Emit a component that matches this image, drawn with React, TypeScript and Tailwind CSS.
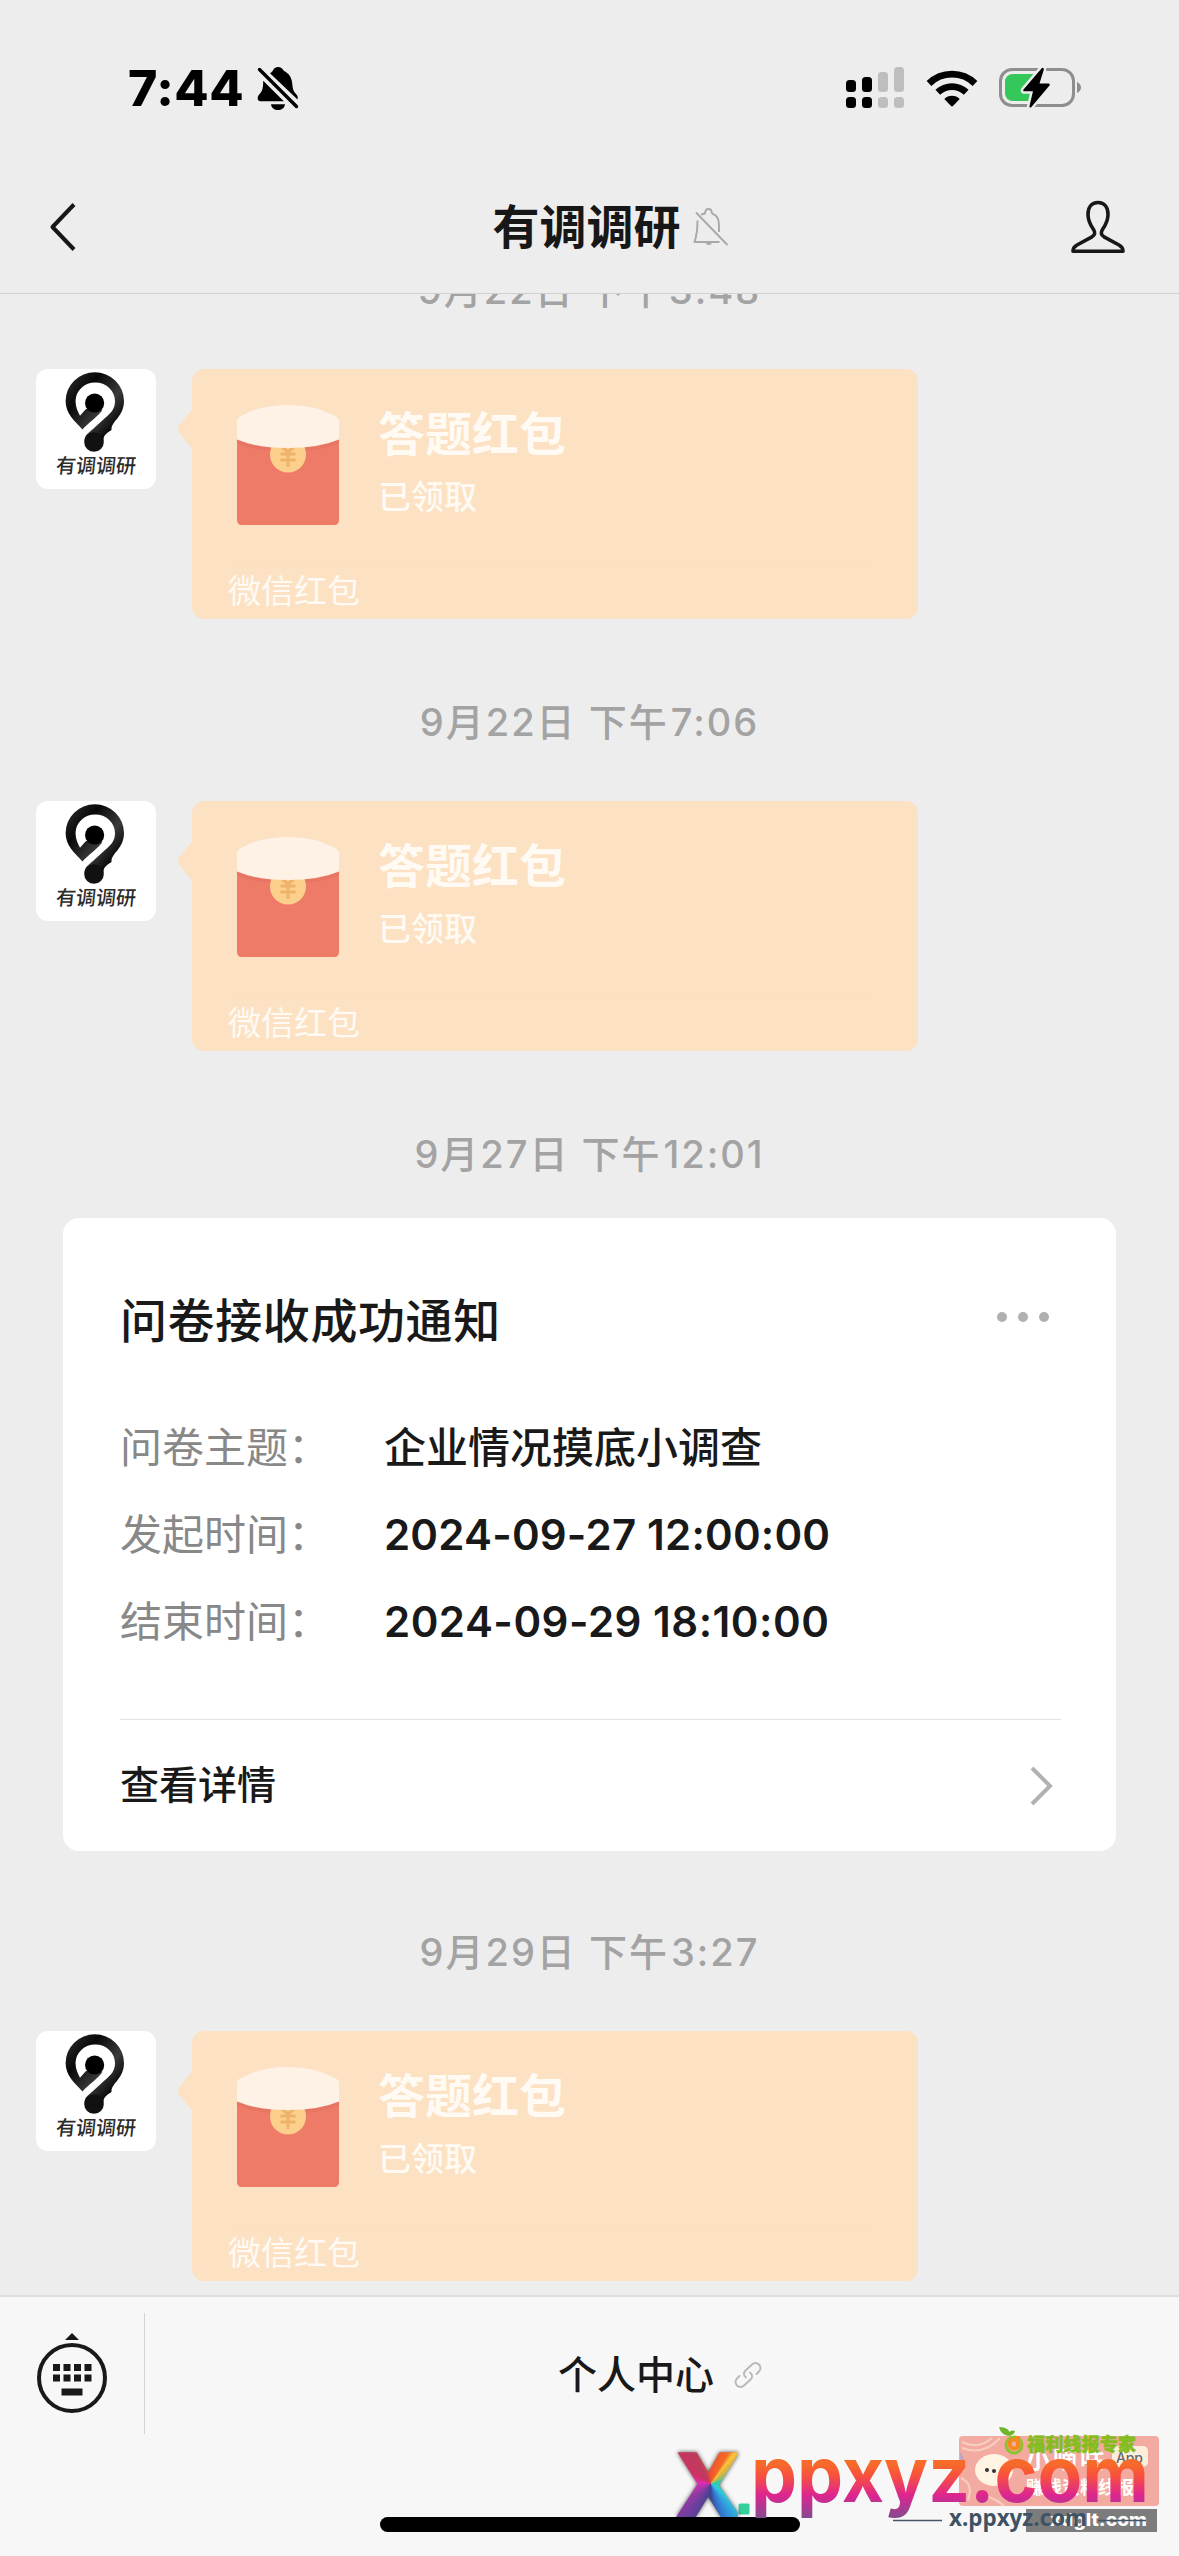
import { Fragment } from 'react'

const sans = "font-['Inter','Noto_Sans_CJK_SC',sans-serif]"

function MutedBellSolid() {
  return (
    <svg className="h-[46px] w-[44px]" viewBox="0 0 44 46" fill="#000">
      <path d="M14 8.2C16 7 16.2 6.600 17 5.200C18.200 3.200 20 2 22 2C25 2 26.800 3.800 28 6C32.400 8 35.600 12 36.200 18C36.700 23 37 26 40 29C41.700 31 42 32 41.500 34.500Z" />
      <path d="M7.200 15.800L27.800 36.200H4.500C1 36.200 1 32 3.200 29.500C6.600 26 7.200 23 7.200 15.800Z" />
      <path d="M15 39.200H29C28.600 42.800 25.600 45 22 45C18.400 45 15.400 42.800 15 39.200Z" />
      <path d="M3.500 4.500L40.500 41.500" stroke="#000" strokeWidth="3.400" strokeLinecap="round" />
    </svg>
  )
}

function Signal() {
  return (
    <svg className="h-[42px] w-[58px]" viewBox="0 0 58 42">
      <g fill="#000">
        <rect x="0" y="13" width="10" height="12" rx="3.500" />
        <rect x="0" y="30" width="10" height="11" rx="3.500" />
        <rect x="16" y="10" width="10" height="15" rx="3.500" />
        <rect x="16" y="30" width="10" height="11" rx="3.500" />
      </g>
      <g fill="#bfbebe">
        <rect x="32" y="5" width="10" height="20" rx="3.500" />
        <rect x="32" y="30" width="10" height="11" rx="3.500" />
        <rect x="48" y="0" width="10" height="25" rx="3.500" />
        <rect x="48" y="30" width="10" height="11" rx="3.500" />
      </g>
    </svg>
  )
}

function Wifi() {
  return (
    <svg className="h-[38px] w-[52px]" viewBox="0 0 52 38">
      <g fill="none" stroke="#000" strokeWidth="6.800">
        <path d="M3 14.500A33 33 0 0 1 49 14.500" />
        <path d="M11.800 23.300A20.500 20.500 0 0 1 40.200 23.300" />
      </g>
      <path d="M18.300 30A11 11 0 0 1 33.700 30L27.200 36.800Q26 38 24.800 36.800Z" />
    </svg>
  )
}

function Battery() {
  return (
    <svg className="h-[44px] w-[84px]" viewBox="0 0 84 44">
      <rect x="1.500" y="3.500" width="73" height="36" rx="11.500" fill="none" stroke="#8e8e8e" strokeWidth="3" />
      <path d="M78 16C80.500 17 82 19 82 21.500S80.500 26 78 27Z" fill="#8e8e8e" />
      <rect x="6" y="8" width="35" height="27" rx="7.500" fill="#34c759" />
      <path
        d="M42.500 2.500L24.500 23.500C23.800 24.500 24.300 25.300 25.300 25.300H34L30.500 40C30.300 42 31.500 42 32.600 40.700L50.500 19.500C51.200 18.500 50.700 17.400 49.500 17.400H40.500L44.700 4C45.200 2 43.700 1 42.500 2.500Z"
        fill="#000"
        stroke="#ededed"
        strokeWidth="5"
        paintOrder="stroke"
      />
    </svg>
  )
}

function MutedBellOutline() {
  return (
    <svg className="h-[40px] w-[36px]" viewBox="0 0 36 40" fill="none" stroke="#a9a9a9" strokeWidth="1.900" strokeLinejoin="round">
      <path d="M4.500 13.500C4.500 23 4.300 27 1.500 35H26.500" />
      <path d="M8 7.500L12 6.500C12.500 0.500 18.500 0.500 19 6.500C24 8 26 12 26 18V25" />
      <path d="M3 5.500L34.500 38" />
      <path d="M13.500 35.500C14 37.500 17.500 37.500 18 35.500" />
    </svg>
  )
}

function Person() {
  return (
    <svg className="h-[54px] w-[54px]" viewBox="0 0 54 54" fill="none" stroke="#171717" strokeWidth="3.600" strokeLinejoin="round">
      <path d="M27 2.500C20.500 2.500 17 7.500 17 14.500C17 20.500 19 24.500 22.500 29.500C24.500 32.500 24 35 21 36.800L6 45C3 46.700 2 48.500 2 51.300H52C52 48.500 51 46.700 48 45L33 36.800C30 35 29.500 32.500 31.500 29.500C35 24.500 37 20.500 37 14.500C37 7.500 33.500 2.500 27 2.500Z" />
    </svg>
  )
}

function AvatarMark() {
  return (
    <svg className="h-[84px] w-[120px]" viewBox="0 0 120 84">
      <defs>
        <linearGradient id="mark" x1="0" y1="0" x2="1" y2="1">
          <stop offset="0" stopColor="#333" />
          <stop offset="0.300" stopColor="#080808" />
          <stop offset="0.600" stopColor="#3a3a3a" />
          <stop offset="0.850" stopColor="#000" />
        </linearGradient>
      </defs>
      {/* pin outline that ends in the lower ball */}
      <path
        d="M46.400 60.500C39 52 29.600 45 29.600 32A29.200 28.700 0 0 1 88 32C88 48 75 52 75.500 61C73 63 67 65 67.500 72L48.500 72C48.500 66 52 64.500 57 60L69 49C75 44 79 40 79 32A19.700 18.500 0 0 0 39.500 32C39.500 38 42 43 44 46.700L50 40L66.500 40.500C64 46 52 54 46.400 60.500Z"
        fill="url(#mark)"
      />
      <circle cx="58.600" cy="34" r="9.600" fill="#000" />
      <circle cx="58" cy="73" r="9.800" fill="#111" />
    </svg>
  )
}

function Avatar() {
  return (
    <div className="flex h-[120px] w-[120px] flex-col items-center overflow-hidden rounded-xl bg-white">
      <AvatarMark />
      <span className="-skew-x-6 text-[20px] leading-[26px] font-medium text-[#2c2c2c]">有调调研</span>
    </div>
  )
}

function Envelope() {
  return (
    <svg className="h-[120px] w-[102px]" viewBox="0 0 102 120">
      <path d="M0 30H102V115Q102 120 97 120H5Q0 120 0 115Z" fill="#ed7b67" />
      <path d="M0 34Q18 43 40 43H62Q84 43 102 34V38Q84 46 62 46H40Q18 46 0 38Z" fill="#e07060" opacity="0.500" />
      <circle cx="51" cy="49.500" r="18" fill="#fcd08c" />
      <path d="M45 42L51 47L57 42M43.500 49H58.500M43.500 55H58.500M51 47V62" fill="none" stroke="#eeb368" strokeWidth="3" />
      <path d="M0 17Q0 12.500 4 11Q24 0 51 0T98 11Q102 12.500 102 17V34.500Q82 43 51 43T0 34.500Z" fill="#fef2e6" />
    </svg>
  )
}

function RedPacket() {
  return (
    <div className="flex pl-9">
      <Avatar />
      <svg className="mt-[40px] ml-[21px] h-[40px] w-[15px]" viewBox="0 0 15 40">
        <path d="M15 0L2 16.500Q0 20 2 23.500L15 40Z" fill="#fce1c3" />
      </svg>
      <div className="flex h-[250px] w-[726px] flex-col rounded-xl bg-[#fce1c3] pr-[44px] pl-[36px] text-[#fffaf3]">
        <div className="flex h-[196px] items-start border-b border-[#fadfc0] pt-9 pl-[9px]">
          <Envelope />
          <div className="ml-[39px] flex flex-col">
            <span className="text-[47px] leading-[58px] font-bold">答题红包</span>
            <span className="mt-[4px] text-[33px] leading-[60px] font-medium">已领取</span>
          </div>
        </div>
        <span className="text-[33px] leading-[52px]">微信红包</span>
      </div>
    </div>
  )
}

function DateLabel({ day, time }: { day: string; time: string }) {
  return (
    <div className="flex justify-center text-[38px] leading-[60px] font-medium tracking-[2px] text-[#a3a3a3]">
      <span className="whitespace-pre">{day} 下午</span>
      <span className="ml-[2px]">{time}</span>
    </div>
  )
}

const details = [
  { label: '问卷主题', value: <span className="font-medium">企业情况摸底小调查</span> },
  { label: '发起时间', value: <span className="font-semibold tracking-[0.2px]">2024-09-27 12:00:00</span> },
  { label: '结束时间', value: <span className="font-semibold tracking-[0.5px]">2024-09-29 18:10:00</span> },
]

function NoticeCard() {
  return (
    <section className="mx-[63px] h-[633px] rounded-2xl bg-white pr-[55px] pl-[57px] text-[#191919]">
      <div className="flex items-center justify-between pt-[68px]">
        <h2 className="text-[47px] leading-[70px] font-medium tracking-[0.6px]">问卷接收成功通知</h2>
        <div className="mr-[12px] -mt-[8px] flex gap-[11px]">
          <i className="size-[10px] rounded-full bg-[#b0b0b0]" />
          <i className="size-[10px] rounded-full bg-[#b0b0b0]" />
          <i className="size-[10px] rounded-full bg-[#b0b0b0]" />
        </div>
      </div>
      <dl className="mt-[48px] grid grid-cols-[264px_1fr] text-[42px] leading-[87px]">
        {details.map(({ label, value }) => (
          <Fragment key={label}>
            <dt className="text-[#888]">{label}：</dt>
            <dd>{value}</dd>
          </Fragment>
        ))}
      </dl>
      <div className="mt-[54px] flex h-[132px] items-center justify-between border-t border-[#e3e3e3] text-[39px] font-medium">
        <span>查看详情</span>
        <svg className="mr-[7px] h-[42px] w-[26px]" viewBox="0 0 26 42" fill="none" stroke="#b2b2b2" strokeWidth="4">
          <path d="M4 3L22 21L4 39" />
        </svg>
      </div>
    </section>
  )
}

function KeyboardIcon() {
  const keys = [19, 29.5, 40, 50.5]
  return (
    <svg className="h-[84px] w-[74px]" viewBox="0 0 74 84" fill="#191919">
      <path d="M31 8L38 1L45 8Z" />
      <circle cx="38" cy="46" r="33" fill="none" stroke="#191919" strokeWidth="4" />
      {keys.map((x) => (
        <Fragment key={x}>
          <rect x={x} y="32" width="7" height="7" />
          <rect x={x} y="42.500" width="7" height="7" />
        </Fragment>
      ))}
      <rect x="27.500" y="56.500" width="21" height="7" />
    </svg>
  )
}

function LinkIcon() {
  return (
    <svg className="h-[28px] w-[28px]" viewBox="0 0 28 28" fill="none" stroke="#b8b8b8" strokeWidth="1.900" strokeLinecap="round">
      <path d="M12 16.500C9 14 9.500 11.500 11.500 9.500L18 3.500C20 1.500 23 1.500 25 3.500S27 8.500 25 10.500L22.500 13" />
      <path d="M16 11.500C19 14 18.500 16.500 16.500 18.500L10 24.500C8 26.500 5 26.500 3 24.500S1 19.500 3 17.500L5.500 15" />
    </svg>
  )
}

function Watermark() {
  return (
    <div className="absolute right-0 bottom-0 h-[136px] w-[519px]">
      <svg className="h-full w-full" viewBox="660 2420 519 136">
        <defs>
          <linearGradient id="word" gradientUnits="userSpaceOnUse" x1="0" y1="2458" x2="0" y2="2518">
            <stop offset="0.100" stopColor="#f76b2a" />
            <stop offset="0.300" stopColor="#f8503f" />
            <stop offset="0.620" stopColor="#dd2590" />
            <stop offset="1" stopColor="#854a90" />
          </linearGradient>
        </defs>
        <rect x="959" y="2436" width="200" height="70" rx="4" fill="#f3aaa0" />
        <path d="M962 2442Q978 2450 992 2438M962 2448Q984 2456 1000 2438M961 2478Q974 2484 968 2500M986 2496Q998 2500 1004 2506" fill="none" stroke="#f7cfc0" strokeWidth="2" />
        <path d="M960 2452Q968 2462 961 2474Z" fill="#b9a3c8" />
        <ellipse cx="994" cy="2470" rx="19" ry="16" fill="#fff3e4" />
        <circle cx="987" cy="2470" r="2" fill="#333" />
        <circle cx="994" cy="2471" r="2" fill="#333" />
        <text x="1026" y="2468" fontSize="24" fontWeight="700" fill="#fff" textLength="78">小嘀咕</text>
        <rect x="1112" y="2446" width="36" height="21" rx="5" fill="#fdeedc" />
        <text x="1116" y="2463" fontSize="14" fontWeight="500" fill="#666" textLength="27">App</text>
        <text x="1026" y="2494" fontSize="18" fontWeight="700" fill="#fff" textLength="108">赚钱资料线报</text>
        <circle cx="1014" cy="2445" r="8" fill="none" stroke="#8fc22f" strokeWidth="3" />
        <path d="M1018 2436V2448" stroke="#f58a1f" strokeWidth="4" />
        <circle cx="1014" cy="2444" r="4.500" fill="none" stroke="#f58a1f" strokeWidth="4" />
        <path d="M999 2427Q1010 2427 1011 2436Q1001 2436 999 2427ZM1008 2435Q1010 2429 1015 2431Q1014 2436 1008 2435Z" fill="#6fb52c" />
        <text x="1027" y="2451" fontSize="18" fontWeight="900" fill="#84bd1e" stroke="#84bd1e" strokeWidth="0.500" textLength="109" lengthAdjust="spacingAndGlyphs">福利线报专家</text>
        <rect x="1026" y="2509" width="131" height="23" fill="#7c7c7c" />
        <text x="1050" y="2526" fontSize="18" fontWeight="800" fill="#fff" textLength="97" lengthAdjust="spacingAndGlyphs">xdglt.com</text>
        <path d="M893 2520.500H942M1098 2520.500H1146" stroke="#43566a" strokeWidth="1.500" />
        <text x="949" y="2526" fontSize="24" fontWeight="700" fill="#3f5265" textLength="138" lengthAdjust="spacingAndGlyphs" className="font-['Open_Sans',sans-serif]">x.ppxyz.com</text>
        <rect x="738.500" y="2503.500" width="11" height="11" rx="1.500" fill="#35cf9c" />
        <text x="751" y="2502" fontSize="77" fontWeight="700" fill="url(#word)" textLength="398" lengthAdjust="spacingAndGlyphs">ppxyz.com</text>
      </svg>
      {/* the X is filled with a conic sweep from its crossing point */}
      <span className="absolute top-[22px] left-[16px] w-[62px] bg-[conic-gradient(from_0deg_at_56%_52%,#ef5030_0deg,#f36a25_30deg,#f7c63c_38deg,#e9b23c_45deg,#30d0a0_80deg,#2ec9da_130deg,#3484dc_155deg,#37438f_180deg,#6b3f9c_215deg,#a837a8_245deg,#e52ab4_275deg,#cf3164_300deg,#bc3c5c_330deg,#ef5030_360deg)] bg-clip-text text-center font-['Open_Sans',sans-serif] text-[90px] leading-[80px] font-extrabold text-transparent drop-shadow-[0_0_2px_rgba(0,0,0,0.7)]">
        X
      </span>
    </div>
  )
}

export default function App() {
  return (
    <div className={`relative flex h-[2556px] w-[1179px] flex-col overflow-hidden bg-[#ededed] ${sans}`}>
      <header className="h-[294px] shrink-0 border-b border-[#cfd1d1]">
        <div className="flex h-[176px] items-center justify-between pr-[96px] pl-[128px]">
          <div className="flex items-center gap-[12px]">
            <span className="w-[116px] text-[50px] leading-[60px] font-extrabold tracking-[0.5px]">7:44</span>
            <MutedBellSolid />
          </div>
          <div className="flex items-center">
            <Signal />
            <div className="ml-[22px]">
              <Wifi />
            </div>
            <div className="ml-[21px]">
              <Battery />
            </div>
          </div>
        </div>
        <div className="grid grid-cols-[1fr_auto_1fr] items-center pt-[19px] pr-[54px] pl-[48px] text-[#171717]">
          <svg className="h-[52px] w-[30px]" viewBox="0 0 30 52" fill="none" stroke="#171717" strokeWidth="4">
            <path d="M26 3.500L4.500 26L26 48.500" strokeLinejoin="round" />
          </svg>
          <div className="ml-[48px] flex items-center gap-[12px]">
            <h1 className="text-[47px] leading-[64px] font-bold">有调调研</h1>
            <MutedBellOutline />
          </div>
          <div className="justify-self-end">
            <Person />
          </div>
        </div>
      </header>

      <main className="min-h-0 flex-1 overflow-hidden">
        <div className="-mt-[34px]">
          <DateLabel day="9月22日" time="3:48" />
        </div>
        <div className="mt-[49px] mb-[73px]">
          <RedPacket />
        </div>
        <DateLabel day="9月22日" time="7:06" />
        <div className="mt-[49px] mb-[73px]">
          <RedPacket />
        </div>
        <DateLabel day="9月27日" time="12:01" />
        <div className="mt-[34px] mb-[71px]">
          <NoticeCard />
        </div>
        <DateLabel day="9月29日" time="3:27" />
        <div className="mt-[49px]">
          <RedPacket />
        </div>
      </main>

      <footer className="flex h-[261px] shrink-0 flex-col justify-between border-t-2 border-[#dedede] bg-[#f7f7f7] pb-[24px]">
        <div className="flex pt-4">
          <div className="flex h-[121px] w-[145px] items-center border-r border-[#d4d4d4] pl-[34px]">
            <KeyboardIcon />
          </div>
          <div className="flex h-[121px] flex-1 items-center justify-center gap-5 pt-[3px] pr-[4px] text-[39px] font-medium text-[#191919]">
            <span>个人中心</span>
            <LinkIcon />
          </div>
        </div>
        <div className="h-[15px] w-[420px] self-center rounded-full bg-black" />
      </footer>
      <Watermark />
    </div>
  )
}
